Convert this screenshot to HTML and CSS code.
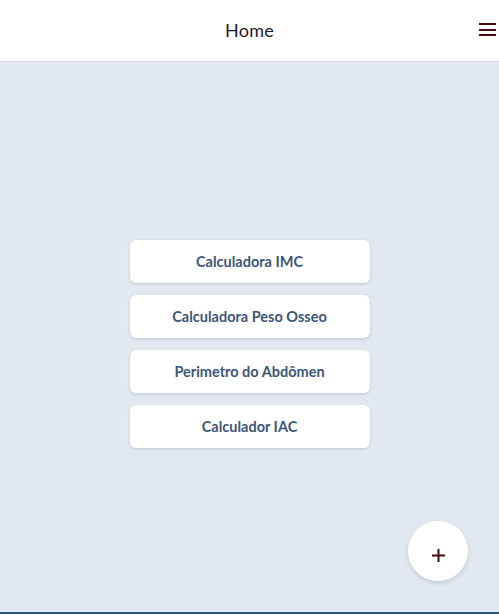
FILE: index.html
```html
<!DOCTYPE html>
<html lang="pt">
<head>
<meta charset="utf-8">
<title>Home</title>
<link rel="stylesheet" href="styles.css">
</head>
<body>
<div class="app">
  <header class="topbar">
    <h1 class="title">Home</h1>
    <button class="menu" aria-label="Menu">
      <span></span><span></span><span></span>
    </button>
  </header>
  <main class="content">
    <div class="list">
      <button class="card">Calculadora IMC</button>
      <button class="card">Calculadora Peso Osseo</button>
      <button class="card">Perimetro do Abdômen</button>
      <button class="card">Calculador IAC</button>
    </div>
    <button class="fab" aria-label="Adicionar">
      <svg class="plus" width="15" height="15" viewBox="0 0 15 15"><path d="M7.5 1v13M1 7.5h13" stroke="#4a0a0f" stroke-width="2" fill="none"/></svg>
    </button>
  </main>
</div>
</body>
</html>
```
FILE: styles.css
```css
* { box-sizing: border-box; }
html, body { margin: 0; padding: 0; height: 100%; }
body { font-family: Lato, "Noto Sans", sans-serif; background: #e2e8f0; }
.app { display: flex; flex-direction: column; height: 614px; border-bottom: 2px solid #2b5673; }
.topbar {
  height: 62px; background: #fff; border-bottom: 1px solid #d3d7dd;
  display: flex; align-items: center; justify-content: center; position: relative;
}
.title { margin: 0 0 2px; font-size: 18px; font-weight: 400; color: #1f1a2e; letter-spacing: 0.3px; }
.menu {
  position: absolute; right: 3px; top: 23px; width: 17px; height: 13px;
  padding: 0; border: 0; background: none; display: flex; flex-direction: column; justify-content: space-between;
}
.menu span { display: block; height: 2px; width: 17px; background: #4a0a0f; }
.content { flex: 1; position: relative; display: flex; align-items: center; justify-content: center; padding-top: 13px; }
.list { display: flex; flex-direction: column; gap: 12px; width: 240px; }
.card {
  height: 43px; border: 0; border-radius: 6px; background: #fff;
  box-shadow: 0 1px 3px rgba(30, 41, 59, 0.18);
  font-family: Lato, "Noto Sans", sans-serif; font-weight: 700; font-size: 14.5px; color: #3e5677;
}
.fab {
  position: absolute; right: 31px; bottom: 31px; width: 60px; height: 60px; border-radius: 50%;
  border: 0; background: #fff; box-shadow: 0 2px 4px rgba(30, 41, 59, 0.15);
  display: flex; align-items: center; justify-content: center; padding: 0;
}
.plus { margin-top: 8px; }
```
